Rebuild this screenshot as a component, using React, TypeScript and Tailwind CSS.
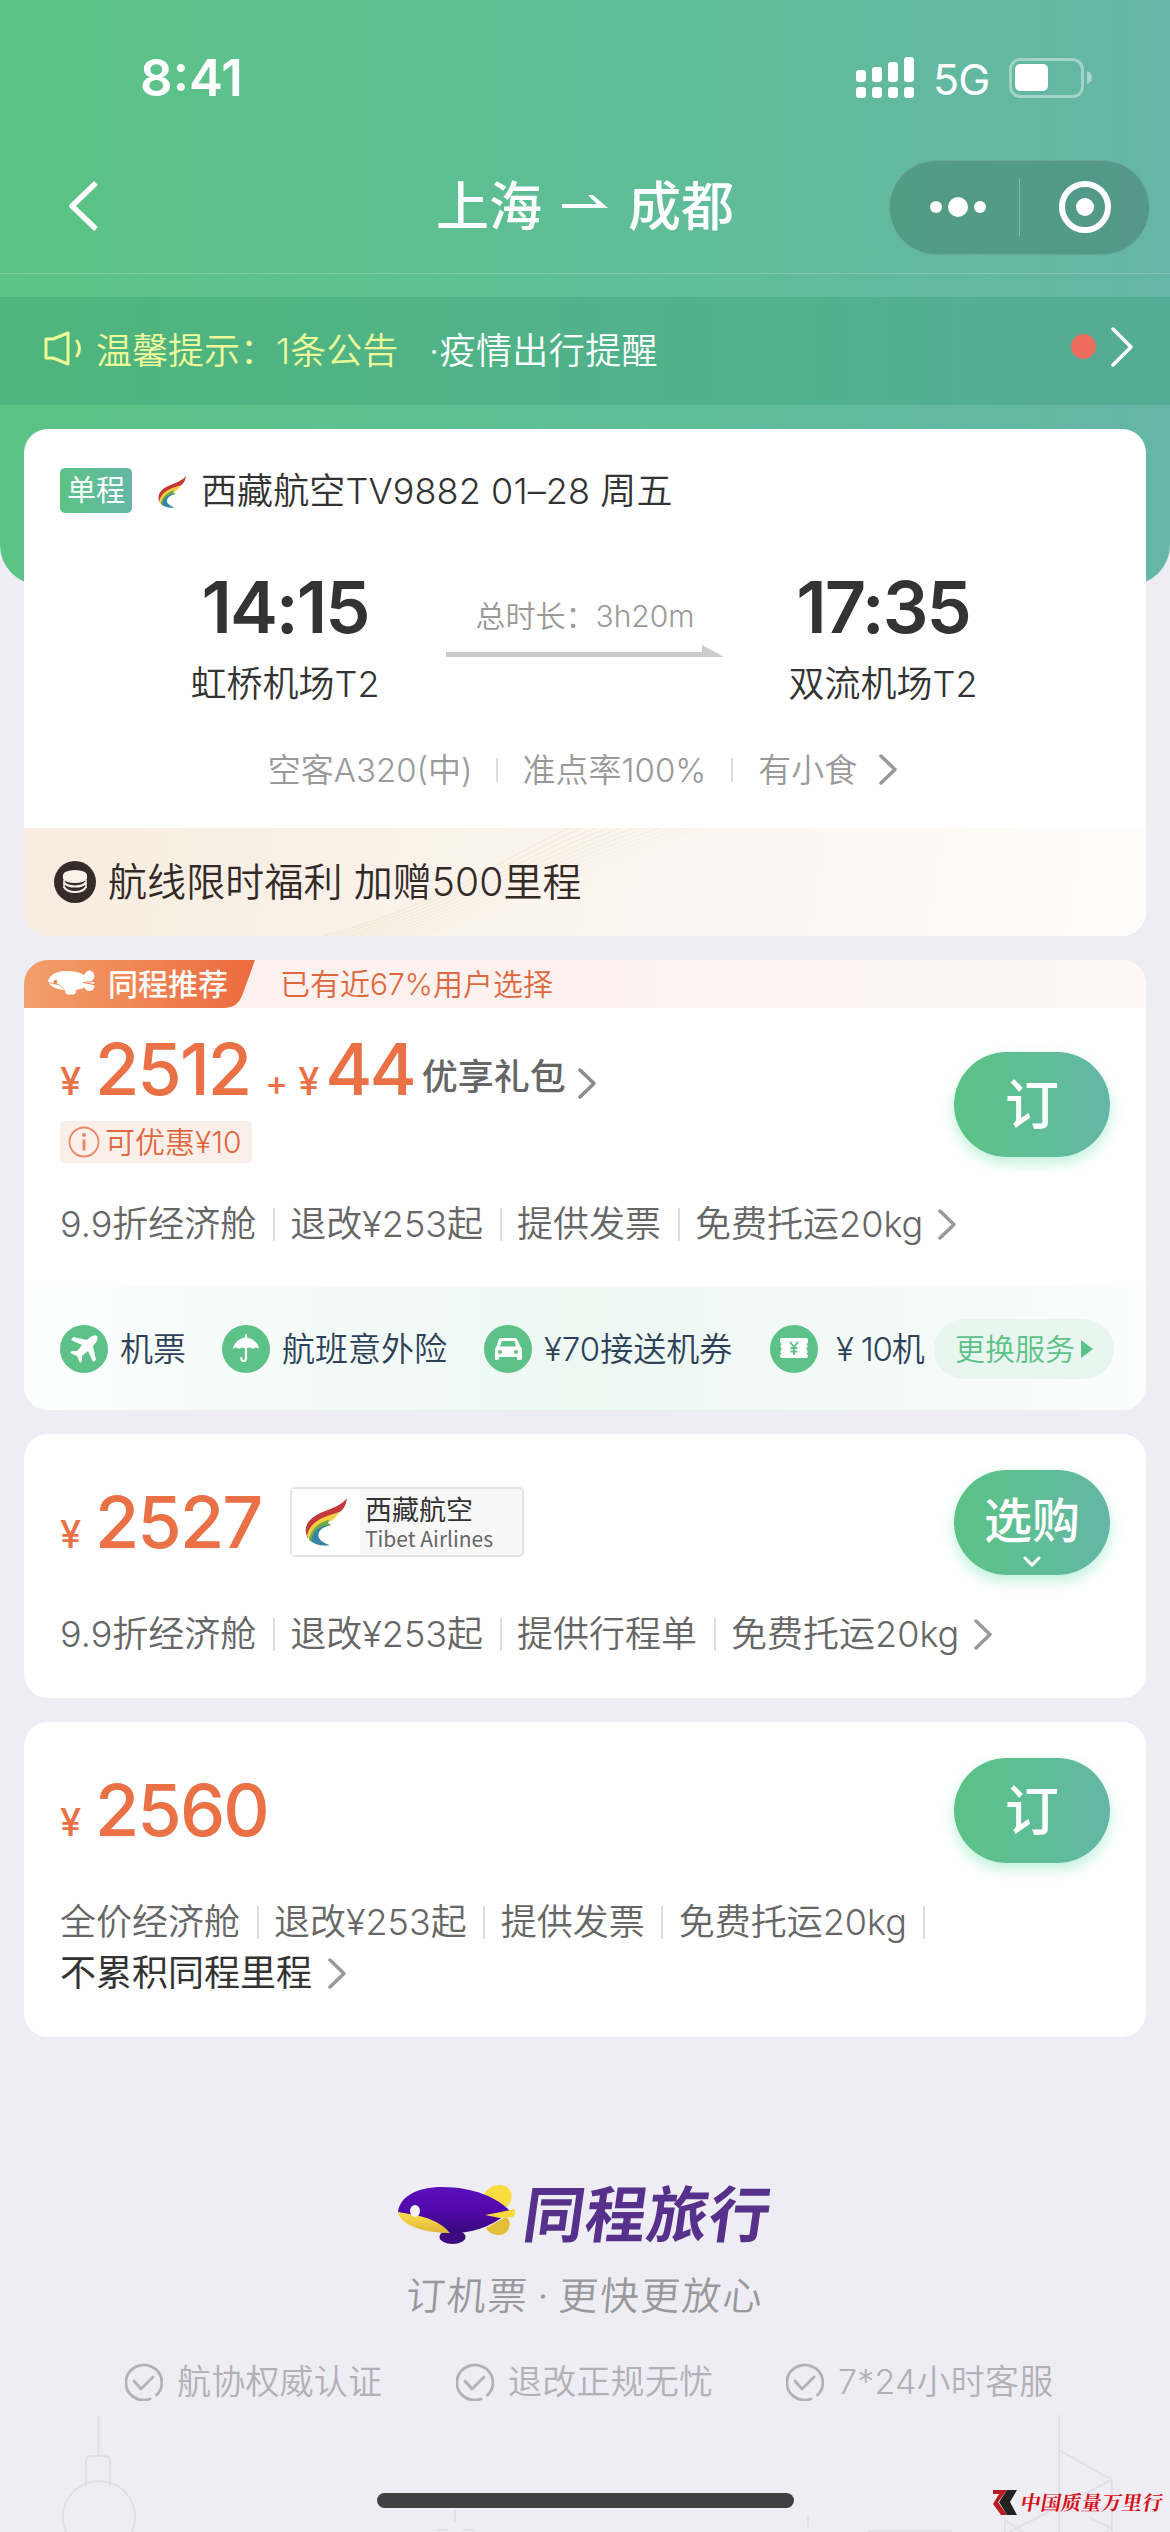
import type { ReactNode } from "react";

const GREEN = "bg-[linear-gradient(90deg,#5bc384_0%,#5fbd97_55%,#65b6a6_100%)]";

function Chevron({ className = "", w = 18, h = 31, sw = 3.5 }: { className?: string; w?: number; h?: number; sw?: number }) {
  return (
    <svg width={w} height={h} viewBox={`0 0 ${w} ${h}`} fill="none" stroke="currentColor" strokeWidth={sw} strokeLinecap="round" strokeLinejoin="round" className={"shrink-0 " + className}>
      <path d={`M2 2 L${w - 2} ${h / 2} L2 ${h - 2}`} />
    </svg>
  );
}

function TibetLogo({ w, h }: { w: number; h: number }) {
  return (
    <svg width={w} height={h} viewBox="0 0 125 142" className="shrink-0">
      <path d="M125 0C121 33 102 46 78 53C42 64 16 84 9 120C-6 92 4 68 34 50C65 33 102 28 125 0Z" fill="#c5383a" />
      <path d="M102 41C62 54 14 66 6 112L14 128C18 96 44 76 70 72C86 64 95 54 102 41Z" fill="#f6cf3e" />
      <path d="M72 64C40 72 18 92 12 124L22 132C24 104 46 86 78 80L68 74Z" fill="#6faa4e" />
      <path d="M82 78C46 80 20 98 19 129C32 140 52 143 74 140C48 131 34 118 42 101C50 88 66 82 82 78Z" fill="#3584a8" />
    </svg>
  );
}

function StatusBar() {
  const bars = [12, 15, 20, 25];
  return (
    <div className="flex h-[141px] items-start pt-[57px] text-white">
      <div className="-mt-[3px] ml-[140px] h-[48px] w-[716px] text-[51px] leading-[48px] font-semibold">8:41</div>
      <svg width="58" height="42" viewBox="0 0 58 42" fill="#fff">
        {bars.map((b, i) => (
          <g key={i}>
            <rect x={i * 16} y={25 - b} width="10" height={b} rx="3" />
            <rect x={i * 16} y="30" width="10" height="11" rx="3" />
          </g>
        ))}
      </svg>
      <div className="ml-[19px] w-[76px] text-[43px] leading-[45px] font-normal tracking-[-1px]">5G</div>
      <svg width="84" height="42" viewBox="0 0 84 42">
        <rect x="1.5" y="2.5" width="72" height="37" rx="10" fill="none" stroke="#fff" strokeOpacity=".4" strokeWidth="3" />
        <rect x="6" y="7" width="33" height="27" rx="5" fill="#fff" />
        <path d="M78 14Q83 16 83 20.500Q83 25 78 27Z" fill="#fff" fillOpacity=".45" />
      </svg>
    </div>
  );
}

function NavBar() {
  return (
    <div className="flex h-[133px] items-center border-b border-white/20 pl-[66px] text-white">
      <svg width="34" height="52" viewBox="0 0 34 52" fill="none" stroke="#fff" strokeWidth="5.500" strokeLinejoin="round" className="mt-[-2px]">
        <path d="M30 3L6 26L30 49" />
      </svg>
      <div className="ml-[336px] flex w-[302px] items-center text-[53px] leading-[60px] font-medium">
        <span>上海</span>
        <svg width="46" height="14" viewBox="0 0 46 14" className="relative top-[-5px] mr-[20px] ml-[20px]">
          <path d="M0 9H35L26 0H31L46 13H0Z" fill="#fff" />
        </svg>
        <span>成都</span>
      </div>
      <div className="ml-[151px] flex h-[95px] w-[261px] items-center rounded-full border border-white/15 bg-black/[0.16]">
        <div className="flex w-[129px] items-center justify-center gap-[6px] pl-[6px]">
          <i className="size-[12px] rounded-full bg-white" />
          <i className="size-[20px] rounded-full bg-white" />
          <i className="size-[12px] rounded-full bg-white" />
        </div>
        <div className="h-[57px] w-px bg-white/30" />
        <div className="flex flex-1 items-center justify-center">
          <div className="flex size-[52px] items-center justify-center rounded-full border-[6px] border-white">
            <i className="size-[18px] rounded-full bg-white" />
          </div>
        </div>
      </div>
    </div>
  );
}

function NoticeBar() {
  return (
    <div className="mt-[23px] flex h-[108px] items-center bg-[#1f8a5f]/[0.22] pl-[44px] text-[36px] leading-[44px] font-[350] text-white">
      <svg width="40" height="36" viewBox="0 0 40 36" fill="none" stroke="#eefa9a" strokeWidth="3" strokeLinejoin="round" strokeLinecap="round" className="mt-[-4px]">
        <path d="M9 8L24 2V33L9 27H2V8Z" />
        <path d="M33 10Q38 17 33 25" />
      </svg>
      <span className="ml-[12px] w-[333px] text-[#eefa9a]">温馨提示：1条公告</span>
      <span className="tracking-[0.400px]">·疫情出行提醒</span>
      <i className="mt-[-10px] ml-auto size-[25px] rounded-full bg-[#ee6c5c]" />
      <Chevron w={22} h={40} sw={3.5} className="mt-[-8px] mr-[37px] ml-[15px]" />
    </div>
  );
}

function Bar({ className = "" }: { className?: string }) {
  return <i className={"block w-[2px] shrink-0 bg-[#dcdcdc] " + className} />;
}

function Airport({ time, name, className = "" }: { time: string; name: string; className?: string }) {
  return (
    <div className={"flex flex-col items-center " + className}>
      <div className="text-[72px] leading-[72px] font-semibold tracking-[-2px]">{time}</div>
      <div className="mt-[19px] text-[36px] leading-[44px] font-[350] whitespace-nowrap">{name}</div>
    </div>
  );
}

function FlightCard() {
  return (
    <section className="mx-[24px] mt-[24px] h-[507px] overflow-hidden rounded-[24px] bg-white text-[#333]">
      <div className="flex h-[123px] items-center pl-[36px]">
        <div className={"flex h-[45px] w-[72px] items-center justify-center rounded-[5px] text-[29px] leading-[45px] text-white " + GREEN}>单程</div>
        <div className="mt-[3px] ml-[26px] flex w-[43px]"><TibetLogo w={28} h={34} /></div>
        <div className="text-[36px] leading-[44px] font-[350] tracking-[0.100px]">西藏航空TV9882 01–28 周五</div>
      </div>
      <div className="flex h-[150px] items-start pt-[19px]">
        <Airport time="14:15" name="虹桥机场T2" className="ml-[161px] w-[200px]" />
        <div className="ml-[61px] flex w-[278px] flex-col items-center pt-[25px]">
          <div className="text-[30px] leading-[40px] font-[350] text-[#999]">总时长：3h20m</div>
          <svg width="278" height="14" viewBox="0 0 278 14" className="mt-[8px]">
            <path d="M0 8H256V1L278 13H0Z" fill="#ccc" />
          </svg>
        </div>
        <Airport time="17:35" name="双流机场T2" className="ml-[59px] w-[200px]" />
      </div>
      <div className="flex h-[126px] items-center justify-center pt-[9px] pr-[5px] text-[33px] leading-[40px] font-[350] text-[#999]">
        <span>空客A320(中)</span>
        <Bar className="mr-[25px] ml-[23px] h-[24px]" />
        <span>准点率100%</span>
        <Bar className="mx-[25px] h-[24px]" />
        <span>有小食</span>
        <Chevron className="ml-[22px]" />
      </div>
      <div className="relative flex h-[108px] items-center bg-[linear-gradient(100deg,#f7ecdf_0%,#faf4ec_45%,#fefdfc_100%)] pl-[30px] text-[#332a28]">
        <svg width="700" height="108" viewBox="0 0 700 108" fill="none" stroke="#e9d9c0" className="absolute top-0 left-[270px]">
          {Array.from({ length: 12 }, (_, i) => (
            <path key={i} d={`M${30 + i * 9} 108C${150 + i * 8} 75 ${200 + i * 8} 35 ${275 + i * 13} 0`} strokeOpacity={0.5 - i * 0.035} />
          ))}
        </svg>
        <svg width="42" height="42" viewBox="0 0 42 42" className="relative">
          <circle cx="21" cy="21" r="21" fill="#352b29" />
          <ellipse cx="21" cy="14.500" rx="12" ry="5.500" fill="#faf2e8" />
          <path d="M9 15H33V18Q30 22 21 22T9 18Z" fill="#faf2e8" />
          <g fill="none" stroke="#faf2e8" strokeWidth="2.200">
            <path d="M10 21.500Q13 25.500 21 25.500T32 21.500" />
            <path d="M10 26Q13 31 21 31T32 26" />
            <path d="M10 19V27M32 19V27" strokeWidth="1.500" />
          </g>
        </svg>
        <span className="relative ml-[12px] text-[39px] leading-[48px] font-[350] tracking-[0.100px]">航线限时福利 加赠500里程</span>
      </div>
    </section>
  );
}

function Price({ value }: { value: string }) {
  return (
    <div className="flex items-baseline text-[#ea7045]">
      <span className="w-[35px] text-[38px] leading-[72px] font-medium">¥</span>
      <span className="text-[72px] leading-[72px] font-medium tracking-[-2px]">{value}</span>
    </div>
  );
}

function BuyButton({ label, arrow }: { label: string; arrow?: boolean }) {
  return (
    <button className={"flex h-[105px] w-[156px] flex-col items-center justify-center rounded-full font-medium text-white shadow-[0_6px_14px_rgba(91,220,160,0.4)] " + GREEN}>
      <span className={arrow ? "mt-[15px] text-[48px] leading-[56px]" : "mt-[2px] text-[54px] leading-[60px]"}>{label}</span>
      {arrow && (
        <svg width="18" height="11" viewBox="0 0 18 11" fill="none" stroke="#fff" strokeWidth="3" strokeLinecap="round" className="mt-[7px]">
          <path d="M2 2L9 9L16 2" />
        </svg>
      )}
    </button>
  );
}

function Terms({ items, children }: { items: string[]; children?: ReactNode }) {
  return (
    <div className="flex items-center text-[36px] leading-[44px] font-[350] whitespace-nowrap text-[#666]">
      {items.map((t, i) => (
        <span key={t} className="flex items-center">
          {i > 0 && <Bar className="mr-[15.500px] ml-[16.500px] h-[33px]" />}
          {t}
        </span>
      ))}
      {children}
    </div>
  );
}

function ServiceIcon({ children }: { children: ReactNode }) {
  return (
    <svg width="48" height="48" viewBox="0 0 48 48" className="shrink-0">
      <circle cx="24" cy="24" r="24" fill="#5cc287" />
      {children}
    </svg>
  );
}

function TagWhale() {
  return (
    <svg width={48} height={25} viewBox="0 0 117 60">
      <ellipse cx="101" cy="14" rx="12" ry="13" fill="#fff" />
      <ellipse cx="101" cy="40" rx="12" ry="11" fill="#fff" />
      <rect x="42" y="44" width="26" height="15" rx="7" fill="#fff" />
      <path d="M0 26C6 8 24 2 46 2C78 2 98 14 110 28C98 40 78 49 54 49C24 49 4 42 0 26Z" fill="#fff" />
      <path d="M86 30L116 27L113 35Z" fill="#fff" stroke="#ee8455" strokeWidth="2.500" />
      <path d="M1 30L14 33Q30 34 38 45" fill="none" stroke="#ee8455" strokeWidth="2" />
      <circle cx="18" cy="29" r="5" fill="#ee8455" />
    </svg>
  );
}

function RecommendCard() {
  return (
    <section className="mx-[24px] mt-[24px] h-[450px] overflow-hidden rounded-[24px] bg-white">
      <div className="flex h-[48px] items-center bg-[linear-gradient(90deg,#fdf0ee_0%,#fdf2ef_50%,#fef9f5_100%)]">
        <div className="relative flex h-[48px] w-[232px] items-center pl-[24px]">
          <svg width="232" height="48" viewBox="0 0 232 48" className="absolute top-0 left-0">
            <defs>
              <linearGradient id="tag" x1="0" x2="1">
                <stop offset="0" stopColor="#f2a06a" />
                <stop offset="1" stopColor="#ed6a3f" />
              </linearGradient>
            </defs>
            <path d="M0 0H231L218 36Q213 48 201 48H0Z" fill="url(#tag)" />
          </svg>
          <div className="relative mt-[-4px]"><TagWhale /></div>
          <span className="relative ml-[12px] text-[30px] leading-[48px] font-medium text-white">同程推荐</span>
        </div>
        <span className="ml-[24px] text-[30px] leading-[48px] font-[350] text-[#e0683f]">已有近67%用户选择</span>
      </div>
      <div className="flex h-[158px] pl-[36px]">
        <div className="flex-1 pt-[25px]">
          <div className="flex h-[75px] items-baseline">
            <Price value="2512" />
            <span className="ml-[15px] w-[33px] text-[34px] leading-[40px] font-medium text-[#ea7045]">+</span>
            <span className="w-[27px] text-[38px] leading-[40px] font-medium text-[#ea7045]">¥</span>
            <span className="text-[72px] leading-[72px] font-medium tracking-[-3px] text-[#ea7045]">44</span>
            <span className="relative top-[-5px] ml-[8px] text-[36px] leading-[44px] font-medium text-[#666]">优享礼包</span>
            <Chevron className="relative top-[4px] ml-[12px] text-[#8c8c8c]" />
          </div>
          <div className="mt-[13px] flex h-[42px] w-[192px] items-center rounded-[4px] bg-[#fbefe9] pl-[8px] text-[30px] leading-[40px] font-[350] whitespace-nowrap text-[#e0683f]">
            <svg width="32" height="32" viewBox="0 0 32 32" className="mr-[5px]">
              <circle cx="16" cy="16" r="14.500" fill="none" stroke="#e88a67" strokeWidth="1.800" />
              <circle cx="16" cy="9" r="2" fill="#e88a67" />
              <rect x="14.500" y="13.500" width="3" height="11" fill="#e88a67" />
            </svg>
            可优惠¥10
          </div>
        </div>
        <div className="mt-[44px] mr-[36px]"><BuyButton label="订" /></div>
      </div>
      <div className="h-[121px] pt-[36px] pl-[36px]">
        <Terms items={["9.9折经济舱", "退改¥253起", "提供发票", "免费托运20kg"]}>
          <Chevron className="ml-[15px] text-[#999]" />
        </Terms>
      </div>
      <div className="flex h-[123px] items-center bg-[linear-gradient(90deg,#fbfefd_0%,#edf8f3_50%,#fafdfc_100%)] pl-[36px] text-[33px] leading-[40px] font-[350] whitespace-nowrap text-[#2d4159]">
        <ServiceIcon>
          <path d="M37 11C34 9 30 12 27 15L13 12L11 15L22 20L17 26L12 26L10 28L17 31L20 38L22 36L22 31L28 26L33 37L36 35L33 21C36 18 39 14 37 11Z" fill="#fff" />
        </ServiceIcon>
        <span className="ml-[12px] w-[102px]">机票</span>
        <ServiceIcon>
          <path d="M11 24C12 17 18 13 24 12.500C30 13 36 17 37 24Q34 21 31 24Q27 21 24 24Q20 21 17 24Q14 21 11 24Z" fill="#fff" />
          <path d="M24 10V33Q24 36 21.500 36T19.500 33" fill="none" stroke="#fff" strokeWidth="2.200" strokeLinecap="round" />
        </ServiceIcon>
        <span className="ml-[12px] w-[202px]">航班意外险</span>
        <ServiceIcon>
          <path d="M17 13H31Q33 13 34 16L36 21Q38 22 38 25V34Q38 35 36 35H34Q33 35 33 33V32H15V33Q15 35 13 35H12Q11 35 11 34V25Q11 22 13 21L14 16Q15 13 17 13ZM18 16L16 21.500H32L30.500 16Z" fill="#fff" fillRule="evenodd" />
          <circle cx="16" cy="27" r="2" fill="#5cc287" />
          <circle cx="32" cy="27" r="2" fill="#5cc287" />
        </ServiceIcon>
        <span className="ml-[12px] w-[226px]">¥70接送机券</span>
        <ServiceIcon>
          <path d="M12 13H36Q38 13 38 15V18Q35 19 38 21Q35 24 38 27Q35 29 38 30V31Q38 33 36 33H12Q10 33 10 31V30Q13 29 10 27Q13 24 10 21Q13 19 10 18V15Q10 13 12 13Z" fill="#fff" />
          <path d="M20 17L24 22L28 17M24 22V30M20.500 23H27.500M20.500 26.500H27.500" fill="none" stroke="#5cc287" strokeWidth="1.800" />
        </ServiceIcon>
        <span className="ml-[18px] w-[98px] tracking-[-1.200px]">¥ 10机</span>
        <div className="flex h-[60px] w-[180px] items-center rounded-full bg-[#e9f6ef] pl-[21px] text-[30px] text-[#5cc287]">
          更换服务
          <svg width="12" height="18" viewBox="0 0 12 18" className="ml-[6px]"><path d="M0 0L12 9L0 18Z" fill="#5cc287" /></svg>
        </div>
      </div>
    </section>
  );
}

function AirlineCard() {
  return (
    <section className="mx-[24px] mt-[24px] h-[264px] rounded-[24px] bg-white pt-[36px] pr-[36px] pl-[36px]">
      <div className="flex h-[105px]">
        <div className="w-[230px] pt-[16px]"><Price value="2527" /></div>
        <div className="mt-[17px] flex h-[70px] w-[234px] items-center rounded-[5px] border-2 border-[#e3e3e3] bg-[#f8f8f8]">
          <div className="flex h-full w-[68px] items-center justify-center bg-white"><TibetLogo w={42} h={48} /></div>
          <div className="ml-[5px]">
            <div className="mt-[3px] text-[27px] leading-[30px] text-[#333]">西藏航空</div>
            <div className="mt-[-1px] font-['Noto_Sans_CJK_SC'] text-[21px] leading-[26px] text-[#666]">Tibet Airlines</div>
          </div>
        </div>
        <div className="ml-auto"><BuyButton label="选购" arrow /></div>
      </div>
      <div className="mt-[37px]">
        <Terms items={["9.9折经济舱", "退改¥253起", "提供行程单", "免费托运20kg"]}>
          <Chevron className="ml-[15px] text-[#999]" />
        </Terms>
      </div>
    </section>
  );
}

function FullFareCard() {
  return (
    <section className="mx-[24px] mt-[24px] h-[315px] rounded-[24px] bg-white pt-[36px] pr-[36px] pl-[36px]">
      <div className="flex h-[105px]">
        <div className="pt-[16px]"><Price value="2560" /></div>
        <div className="ml-auto"><BuyButton label="订" /></div>
      </div>
      <div className="mt-[37px]">
        <Terms items={["全价经济舱", "退改¥253起", "提供发票", "免费托运20kg"]}>
          <Bar className="ml-[16px] h-[33px]" />
        </Terms>
      </div>
      <div className="mt-[7px] flex items-center text-[36px] leading-[44px] text-[#333]">
        不累积同程里程
        <Chevron className="ml-[16px] text-[#999]" />
      </div>
    </section>
  );
}

function TrustItem({ text, className }: { text: string; className: string }) {
  return (
    <div className={"flex items-center " + className}>
      <svg width="38" height="38" viewBox="0 0 38 38" fill="none" stroke="#b1b1b6" strokeWidth="2.800" strokeLinecap="round" className="mr-[14px] shrink-0">
        <path d="M25 36A18 17.500 0 1 1 31.500 32" />
        <path d="M9 18L16 26L28 14" strokeLinejoin="round" />
      </svg>
      {text}
    </div>
  );
}

function BrandWhale() {
  return (
    <svg width="118" height="61" viewBox="0 0 118 61">
      <defs>
        <linearGradient id="wb" x1="0" y1="0" x2="0" y2="1">
          <stop offset="0" stopColor="#5a0fb8" />
          <stop offset=".5" stopColor="#5208ac" />
          <stop offset="1" stopColor="#37087c" />
        </linearGradient>
        <linearGradient id="wy" x1="0" y1="0" x2="0" y2="1">
          <stop offset="0" stopColor="#ffe04a" />
          <stop offset="1" stopColor="#e0b53a" />
        </linearGradient>
      </defs>
      <path d="M86 10C92 0 106-2 112 6C116 14 112 22 106 24Z" fill="#fbdc3e" />
      <path d="M88 44C92 52 106 54 110 46C113 40 112 36 108 33Z" fill="#e3be38" />
      <ellipse cx="54.500" cy="53" rx="13" ry="7" fill="#3f0b80" />
      <path d="M0 28C2 12 20 3 44 3C76 3 100 14 112 27C100 38 82 48 58 49C40 50 28 44 20 38C12 34 6 31 0 28Z" fill="url(#wb)" />
      <path d="M0 28C14 31 38 32 52 49C30 49 3 43 0 28Z" fill="url(#wy)" />
      <path d="M87 31L103 28L116 25Q119 29 115 33L102 34Z" fill="#fbd83c" />
      <ellipse cx="17" cy="27" rx="5" ry="6" fill="#f6f3f2" />
    </svg>
  );
}

function Footer() {
  return (
    <footer className="relative h-[495px] overflow-hidden text-[#b1b1b6]">
      <svg width="1170" height="120" viewBox="0 0 1170 120" fill="none" stroke="#e1e0e5" strokeWidth="2" className="absolute top-[375px] left-0">
        <path d="M98.500 4V43M86 74V49Q86 44 91 44H105Q110 44 110 49V74" />
        <circle cx="99" cy="105" r="36" />
        <path d="M455 98V110M437 118H448M463 118H474M808 104V117M868 119H952" />
        <path d="M1059 3V120M1059 38L1112 68L1005 122M1112 68V120M1112 116L1090 106M1112 116L1095 128M1005 108V120M1005 108L1030 125" />
      </svg>
      <div className="relative flex items-start pt-[145px] pl-[398px]">
        <div className="pt-[2px]"><BrandWhale /></div>
        <div className="ml-[8px] -skew-x-[8deg] text-[61px] leading-[66px] font-bold tracking-[0.900px] text-[#57308c]">同程旅行</div>
      </div>
      <div className="relative mt-[22px] flex h-[52px] -skew-x-[5deg] justify-center text-[39px] leading-[52px] font-[350] tracking-[2px] text-[#98989d]">订机票<span className="w-[30px] text-center">·</span>更快更放心</div>
      <div className="relative mt-[37px] flex text-[34px] leading-[46px] font-[350] tracking-[0.200px] whitespace-nowrap">
        <TrustItem text="航协权威认证" className="ml-[125px] w-[331px]" />
        <TrustItem text="退改正规无忧" className="w-[330px]" />
        <TrustItem text="7*24小时客服" className="" />
      </div>
      <div className="absolute top-[456px] left-[377px] h-[15px] w-[417px] rounded-full bg-[#404043]" />
      <div className="absolute top-[451px] left-[993px] flex items-center text-[#d8101a]">
        <svg width="24" height="25" viewBox="0 0 24 25">
          <path d="M0 0H14L5 12L14 25H8L0 14L6 4H0Z" fill="#b81c22" />
          <path d="M14 0H24L17 12L24 25H14L6 12Z" fill="#222" />
        </svg>
        <span className="ml-[4px] -skew-x-[10deg] font-['Noto_Serif_CJK_SC','Noto_Sans_CJK_SC',serif] text-[20px] leading-[28px] font-bold tracking-[0.300px]">中国质量万里行</span>
      </div>
    </footer>
  );
}

export default function App() {
  return (
    <div className="relative h-[2532px] w-[1170px] overflow-hidden bg-[#eeedf3] font-[Inter,'Noto_Sans_CJK_SC',sans-serif]">
      <div className={"h-[585px] rounded-b-[40px] " + GREEN}>
        <StatusBar />
        <NavBar />
        <NoticeBar />
      </div>
      <div className="relative -mt-[180px]">
        <FlightCard />
        <RecommendCard />
        <AirlineCard />
        <FullFareCard />
        <Footer />
      </div>
    </div>
  );
}
